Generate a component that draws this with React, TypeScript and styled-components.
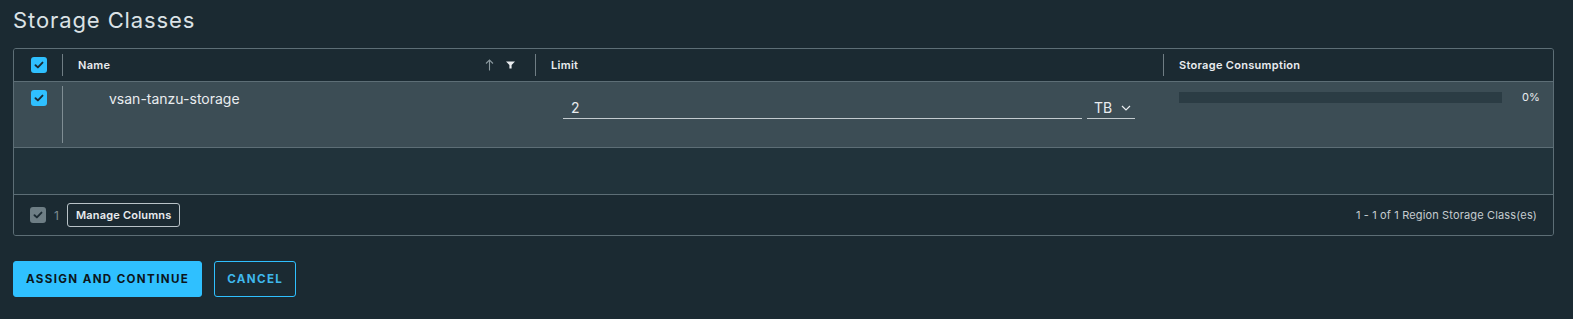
import React from "react";
import styled, { createGlobalStyle } from "styled-components";

const Global = createGlobalStyle`
  html, body { margin: 0; padding: 0; background: #1b2a32; }
  body { font-family: Inter, "Noto Sans", Lato, sans-serif; color: #e9ecef; }
  * { box-sizing: border-box; }
`;

const Page = styled.div`
  width: 1573px;
  height: 319px;
  background: #1b2a32;
  padding: 0 19px 0 13px;
  overflow: hidden;
`;

const Title = styled.h2`
  margin: 0;
  padding-top: 5px;
  height: 48px;
  font-size: 22px;
  font-weight: 400;
  line-height: 30px;
  color: #dbe2e6;
  letter-spacing: 0.9px;
`;

const Grid = styled.div`
  border: 1px solid #5d6e76;
  border-radius: 3px;
  background: #21333b;
  display: flex;
  flex-direction: column;
  overflow: hidden;
`;

const Row = styled.div<{ $kind: "head" | "body" }>`
  display: grid;
  grid-template-columns: 48px 473px 628px 1fr;
  height: ${(p) => (p.$kind === "head" ? 33 : 66)}px;
  background: ${(p) => (p.$kind === "head" ? "#1b2a32" : "#3c4d55")};
  border-bottom: 1px solid #5d6e76;
`;

const Cell = styled.div<{ $sep?: boolean; $kind: "head" | "body" }>`
  position: relative;
  display: flex;
  align-items: ${(p) => (p.$kind === "head" ? "center" : "flex-start")};
  padding: 0 16px;
  font-size: ${(p) => (p.$kind === "head" ? "11px" : "14px")};
  font-weight: ${(p) => (p.$kind === "head" ? 600 : 400)};
  letter-spacing: ${(p) => (p.$kind === "head" ? "0.3px" : "0")};
  color: #e9ecef;
  ${(p) =>
    p.$sep
      ? `&::before {
    content: "";
    position: absolute;
    left: 0;
    top: ${p.$kind === "head" ? "5px" : "4px"};
    bottom: ${p.$kind === "head" ? "5px" : "4px"};
    width: 1px;
    background: ${p.$kind === "head" ? "#6f7d84" : "#7f8d93"};
  }`
      : ""}
`;

const CheckCell = styled.div<{ $kind: "head" | "body" }>`
  display: flex;
  justify-content: center;
  align-items: ${(p) => (p.$kind === "head" ? "center" : "flex-start")};
  padding-top: ${(p) => (p.$kind === "head" ? "0" : "8px")};
  padding-left: 1px;
`;

const Box = styled.span<{ $muted?: boolean }>`
  width: 16px;
  height: 16px;
  border-radius: 3px;
  background: ${(p) => (p.$muted ? "#6e7e85" : "#2fc0ff")};
  display: inline-flex;
  align-items: center;
  justify-content: center;
`;

const Checkbox = ({ muted }: { muted?: boolean }) => (
  <Box $muted={muted}>
    <svg width="10" height="8" viewBox="0 0 10 8">
      <path d="M1.5 4.2 L3.9 6.4 L8.5 1.6" fill="none" stroke="#1b2a32" strokeWidth="1.9" strokeLinecap="round" strokeLinejoin="round" />
    </svg>
  </Box>
);

const HeadLabel = styled.span`
  flex: 1;
`;

const HeadIcons = styled.span`
  display: flex;
  align-items: center;
  gap: 12px;
  margin-right: 4px;
`;

const NameText = styled.span`
  padding-top: 9px;
  padding-left: 31px;
  line-height: 16px;
  color: #e9ecef;
`;

const LimitWrap = styled.div`
  display: flex;
  align-items: flex-end;
  gap: 5px;
  padding-left: 12px;
  margin-top: 18px;
  height: 19px;
`;

const NumberInput = styled.div`
  width: 519px;
  height: 19px;
  border-bottom: 1px solid #c3cbcf;
  padding-left: 8px;
  font-size: 14px;
  line-height: 16px;
  color: #e9ecef;
`;

const Select = styled.div`
  width: 48px;
  height: 19px;
  border-bottom: 1px solid #c3cbcf;
  display: flex;
  align-items: flex-start;
  gap: 9px;
  padding-left: 7px;
  font-size: 14px;
  line-height: 16px;
  color: #e9ecef;
`;

const Consumption = styled.div`
  display: flex;
  align-items: center;
  width: 100%;
  padding-top: 9px;
  gap: 20px;
`;

const Track = styled.div`
  flex: 1;
  height: 11px;
  background: #2b3c44;
`;

const Pct = styled.span`
  font-size: 11px;
  color: #e9ecef;
  width: 16px;
  margin-right: -1px;
  line-height: 12px;
`;

const Empty = styled.div`
  height: 47px;
  border-bottom: 1px solid #5d6e76;
`;

const Footer = styled.div`
  height: 40px;
  background: #1b2a32;
  display: flex;
  align-items: center;
  padding: 0 16px 0 16px;
`;

const Count = styled.span`
  margin-left: 8px;
  font-size: 12px;
  color: #7f8d93;
`;

const SmallButton = styled.button`
  margin-left: 8px;
  height: 24px;
  padding: 0 8px;
  background: transparent;
  border: 1px solid #b9c3c8;
  border-radius: 3px;
  color: #e9ecef;
  font-family: inherit;
  font-size: 11px;
  font-weight: 600;
  letter-spacing: 0.2px;
`;

const FooterText = styled.span`
  margin-left: auto;
  font-size: 11px;
  letter-spacing: 0.15px;
  color: #c5ccd0;
`;

const Actions = styled.div`
  display: flex;
  gap: 12px;
  margin-top: 25px;
`;

const Button = styled.button<{ $primary?: boolean }>`
  height: 36px;
  padding: 0 12px;
  border-radius: 3px;
  font-family: inherit;
  font-size: 11.6px;
  font-weight: 700;
  letter-spacing: 1.35px;
  border: 1px solid #2fc0ff;
  background: ${(p) => (p.$primary ? "#2fc0ff" : "transparent")};
  color: ${(p) => (p.$primary ? "#0c161b" : "#3fb8ec")};
`;

export default function App() {
  return (
    <>
      <Global />
      <Page>
        <Title>Storage Classes</Title>
        <Grid>
          <Row $kind="head">
            <CheckCell $kind="head">
              <Checkbox />
            </CheckCell>
            <Cell $kind="head" $sep>
              <HeadLabel>Name</HeadLabel>
              <HeadIcons>
                <svg width="9" height="12" viewBox="0 0 9 12">
                  <path d="M4.5 11.5 V1.2 M1 4.5 L4.5 1 L8 4.5" fill="none" stroke="#8a989e" strokeWidth="1.1" />
                </svg>
                <svg width="9" height="8" viewBox="0 0 9 8">
                  <path d="M0 0.5 H9 L5.6 4 V7.5 H3.4 V4 Z" fill="#e9ecef" />
                </svg>
              </HeadIcons>
            </Cell>
            <Cell $kind="head" $sep>
              <HeadLabel>Limit</HeadLabel>
            </Cell>
            <Cell $kind="head" $sep>
              <HeadLabel>Storage Consumption</HeadLabel>
            </Cell>
          </Row>
          <Row $kind="body">
            <CheckCell $kind="body">
              <Checkbox />
            </CheckCell>
            <Cell $kind="body" $sep>
              <NameText>vsan-tanzu-storage</NameText>
            </Cell>
            <Cell $kind="body">
              <LimitWrap>
                <NumberInput>2</NumberInput>
                <Select>
                  TB
                  <svg width="10" height="6" viewBox="0 0 10 6" style={{ marginTop: 5 }}>
                    <path d="M1 1 L5 5 L9 1" fill="none" stroke="#e9ecef" strokeWidth="1.2" />
                  </svg>
                </Select>
              </LimitWrap>
            </Cell>
            <Cell $kind="body">
              <Consumption>
                <Track />
                <Pct>0%</Pct>
              </Consumption>
            </Cell>
          </Row>
          <Empty />
          <Footer>
            <Checkbox muted />
            <Count>1</Count>
            <SmallButton>Manage Columns</SmallButton>
            <FooterText>1 - 1 of 1 Region Storage Class(es)</FooterText>
          </Footer>
        </Grid>
        <Actions>
          <Button $primary>ASSIGN AND CONTINUE</Button>
          <Button>CANCEL</Button>
        </Actions>
      </Page>
    </>
  );
}
